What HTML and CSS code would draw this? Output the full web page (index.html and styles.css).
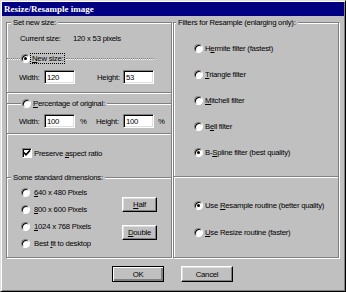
FILE: index.html
```html
<!DOCTYPE html>
<html>
<head>
<meta charset="utf-8">
<title>Resize/Resample image</title>
<link rel="stylesheet" href="styles.css">
</head>
<body>
<div class="window">
  <div class="titlebar">Resize/Resample image</div>
  <div class="content">
    <div class="columns">
      <div class="group col-left">
        <div class="legend">Set new size:</div>
        <div class="current"><span class="cur-lbl">Current size:</span><span>120 x 53 pixels</span></div>

        <div class="hdr hdr-new">
          <span class="hline dotted lead"></span>
          <span class="radio checked"></span>
          <span class="hdr-text focus"><u>N</u>ew size:</span>
          <span class="hline dotted tail short"></span>
        </div>
        <div class="fields f-new">
          <span class="flbl">Width:</span><span class="input">120</span>
          <span class="flbl fl-h">Height:</span><span class="input">53</span>
        </div>
        <div class="sep s1"></div>

        <div class="hdr hdr-pct">
          <span class="hline lead lead-pct"></span>
          <span class="radio"></span>
          <span class="hdr-text"><u>P</u>ercentage of original:</span>
          <span class="hline tail"></span>
        </div>
        <div class="fields f-pct">
          <span class="flbl">Width:</span><span class="input">100</span><span class="pct">%</span>
          <span class="flbl fl-h2">Height:</span><span class="input">100</span><span class="pct pct-last">%</span>
        </div>
        <div class="sep s2"></div>

        <div class="check-row">
          <span class="checkbox"><svg width="8" height="8" viewBox="0 0 8 8"><path d="M1 3.6 L3 5.8 L7 1.4" fill="none" stroke="#000" stroke-width="1.6"/></svg></span>
          <span class="check-text">Preserve <u>a</u>spect ratio</span>
        </div>

        <div class="hdr hdr-std">
          <span class="hline lead lead-std"></span>
          <span class="hdr-text">Some standard dimensions:</span>
          <span class="hline tail"></span>
        </div>
        <div class="std-body">
          <div class="opts">
            <div class="opt"><span class="radio"></span><span class="opt-text"><u>6</u>40 x 480 Pixels</span></div>
            <div class="opt"><span class="radio"></span><span class="opt-text"><u>8</u>00 x 600 Pixels</span></div>
            <div class="opt"><span class="radio"></span><span class="opt-text"><u>1</u>024 x 768 Pixels</span></div>
            <div class="opt"><span class="radio"></span><span class="opt-text">Best <u>f</u>it to desktop</span></div>
          </div>
          <div class="side-btns">
            <div class="btn btn-sm"><u>H</u>alf</div>
            <div class="btn btn-sm"><u>D</u>ouble</div>
          </div>
        </div>
      </div>

      <div class="group col-right">
        <div class="legend legend-r">Filters for Resample (enlarging only):</div>
        <div class="ropts">
          <div class="opt"><span class="radio"></span><span class="opt-text">H<u>e</u>rmite filter (fastest)</span></div>
          <div class="opt"><span class="radio"></span><span class="opt-text"><u>T</u>riangle filter</span></div>
          <div class="opt"><span class="radio"></span><span class="opt-text"><u>M</u>itchell filter</span></div>
          <div class="opt"><span class="radio"></span><span class="opt-text">B<u>e</u>ll filter</span></div>
          <div class="opt"><span class="radio checked"></span><span class="opt-text">B-<u>S</u>pline filter (best quality)</span></div>
        </div>
        <div class="sep s3"></div>
        <div class="ropts ropts-2">
          <div class="opt"><span class="radio checked"></span><span class="opt-text">Use <u>R</u>esample routine (better quality)</span></div>
          <div class="opt"><span class="radio"></span><span class="opt-text"><u>U</u>se Resize routine (faster)</span></div>
        </div>
      </div>
    </div>
    <div class="dialog-btns">
      <div class="btn btn-ok">OK</div>
      <div class="btn btn-cancel">Cancel</div>
    </div>
  </div>
</div>
</body>
</html>
```

FILE: styles.css
```css
* { box-sizing: border-box; }
html, body { margin: 0; padding: 0; background: #c0c0c0; }
body {
  font-family: "Liberation Sans", Arial, sans-serif;
  font-size: 7.75px;
  letter-spacing: -0.25px;
  line-height: 9px;
  color: #000;
}
u { text-decoration: underline; text-underline-offset: 1px; }

.window {
  width: 346px;
  height: 292px;
  background: #c0c0c0;
  border: 1px solid;
  border-color: #dfdfdf #000 #000 #dfdfdf;
  box-shadow: inset 1px 1px 0 #fff, inset -1px -1px 0 #808080;
  padding: 1px;
  display: flex;
  flex-direction: column;
}

.titlebar {
  height: 14px;
  background: #000080;
  color: #fff;
  font-family: "Liberation Serif", "Times New Roman", serif;
  font-weight: bold;
  font-size: 9px;
  letter-spacing: 0;
  line-height: 14px;
  padding-left: 2px;
}

.content { padding: 6px 5px 0 4px; }

.columns {
  display: flex;
  gap: 1px;
}

.group {
  display: flex;
  flex-direction: column;
  width: 166px;
  height: 236px;
  border: 1px solid #808080;
  box-shadow: inset 1px 1px 0 #fff, 1px 1px 0 #fff;
}
.legend {
  width: fit-content;
  height: 9px;
  margin: -5px 0 0 4px;
  padding: 0 2px;
  background: #c0c0c0;
  white-space: nowrap;
}
.legend-r { margin-left: 2px; }

/* etched lines */
.sep {
  height: 2px;
  border-top: 1px solid #808080;
  border-bottom: 1px solid #fff;
}
.hline {
  height: 2px;
  margin-top: 4px;
  border-top: 1px solid #808080;
  border-bottom: 1px solid #fff;
}
.hline.dotted {
  border-top-style: dotted;
  border-bottom-style: dotted;
}
.hdr {
  display: flex;
  align-items: flex-start;
  height: 9px;
}
.hdr .radio { margin-left: 1px; }
.hdr-text { white-space: nowrap; margin-left: 2px; }
.lead { width: 13px; flex: none; }
.tail { flex: 1; margin-left: 2px; }
.tail.short { margin-right: 17px; }
.lead-pct { width: 14px; }
.lead-std { width: 4px; }
.hdr-std .hdr-text { margin-left: 0; padding: 0 2px; }
.hdr-std .tail { margin-left: 0; }
.focus { outline: 1px dotted #000; outline-offset: 0; padding: 0 1px; margin-left: 1px; }

/* Set new size */
.current {
  display: flex;
  height: 9px;
  margin-top: 7px;
  padding-left: 13px;
}
.cur-lbl { width: 53px; }
.hdr-new { margin-top: 11px; }
.hdr-pct { margin-top: 5px; }
.hdr-std { margin-top: 15px; }

.fields {
  display: flex;
  align-items: center;
  height: 14px;
  padding-left: 12px;
}
.f-new { margin-top: 7px; }
.f-pct { margin-top: 6px; }
.s1 { margin-top: 8px; }
.s2 { margin-top: 5px; }
.flbl { width: 25px; }
.fl-h { width: 26px; margin-left: 22px; }
.fl-h2 { width: 27px; }
.pct { width: 16px; margin-left: 5px; }
.pct-last { width: auto; margin-left: 4px; }

.input {
  width: 31px;
  height: 14px;
  background: #fff;
  border: 1px solid;
  border-color: #808080 #fff #fff #808080;
  box-shadow: inset 1px 1px 0 #000, inset -1px -1px 0 #dfdfdf;
  padding: 2px 0 0 2px;
  line-height: 9px;
}

/* radio + checkbox */
.radio {
  position: relative;
  flex: none;
  display: inline-block;
  width: 9px;
  height: 9px;
  border-radius: 50%;
  background: #fff;
  border: 1px solid;
  border-color: #808080 #fff #fff #808080;
  box-shadow: inset 1px 1px 0 #000;
}
.radio.checked::after {
  content: "";
  position: absolute;
  left: 2px;
  top: 2px;
  width: 3px;
  height: 3px;
  border-radius: 50%;
  background: #000;
}
.checkbox {
  flex: none;
  display: flex;
  align-items: center;
  justify-content: center;
  width: 10px;
  height: 10px;
  background: #fff;
  border: 1px solid;
  border-color: #808080 #fff #fff #808080;
  box-shadow: inset 1px 1px 0 #000;
}
.check-row {
  display: flex;
  align-items: center;
  height: 10px;
  margin-top: 13px;
  padding-left: 15px;
}
.check-text { margin-left: 2px; white-space: nowrap; }

.opt {
  display: flex;
  align-items: center;
  height: 9px;
}
.opt-text { margin-left: 4px; white-space: nowrap; }

/* standard dimensions */
.std-body { display: flex; }
.opts {
  display: flex;
  flex-direction: column;
  gap: 8px;
  margin-top: 6px;
  padding-left: 14px;
  width: 115px;
}
.side-btns {
  display: flex;
  flex-direction: column;
  gap: 13px;
  margin-top: 15px;
}

/* right column */
.ropts {
  display: flex;
  flex-direction: column;
  gap: 17px;
  margin-top: 17px;
  padding-left: 20px;
}
.ropts .opt-text { margin-left: 2px; }
.s3 { margin-top: 19px; }
.ropts-2 { gap: 18px; margin-top: 23px; }

/* buttons */
.btn {
  display: flex;
  align-items: center;
  justify-content: center;
  background: #c0c0c0;
  border: 1px solid;
  border-color: #fff #000 #000 #fff;
  box-shadow: inset -1px -1px 0 #808080, inset 1px 1px 0 #dfdfdf;
}
.btn-sm { width: 35px; height: 15px; }
.dialog-btns {
  display: flex;
  justify-content: center;
  gap: 17px;
  margin-top: 8px;
}
.dialog-btns .btn { width: 52px; height: 16px; }
.btn-ok {
  border-color: #000;
  box-shadow: inset 1px 1px 0 #fff, inset -2px -2px 0 #808080, inset -1px -1px 0 #000;
}
```
